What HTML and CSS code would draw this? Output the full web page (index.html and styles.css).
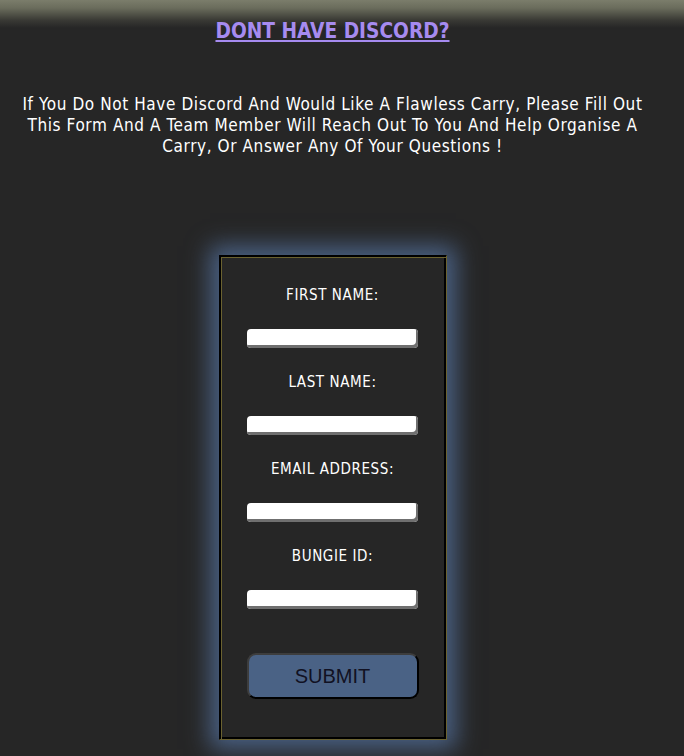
FILE: index.html
```html
<!DOCTYPE html>
<html>
<head>
<meta charset="utf-8">
<link rel="stylesheet" href="styles.css">
</head>
<body>
<div class="page">
  <h1 class="title"><a href="#">DONT HAVE DISCORD?</a></h1>
  <p class="intro">If You Do Not Have Discord And Would Like A Flawless Carry, Please Fill Out This Form And A Team Member Will Reach Out To You And Help Organise A Carry, Or Answer Any Of Your Questions !</p>
  <form class="form">
    <label class="label">FIRST NAME:</label>
    <input class="field" type="text">
    <label class="label">LAST NAME:</label>
    <input class="field" type="text">
    <label class="label">EMAIL ADDRESS:</label>
    <input class="field" type="text">
    <label class="label">BUNGIE ID:</label>
    <input class="field" type="text">
    <button class="submit" type="button">SUBMIT</button>
  </form>
</div>
</body>
</html>
```

FILE: styles.css
```css
html, body {
  margin: 0;
  padding: 0;
  background: #262626;
  height: 100%;
  overflow: hidden;
}
body {
  background: linear-gradient(to bottom, #7b7d6b 0px, #6a6c5c 8px, #3a3a35 20px, #262626 28px, #262626 100%);
  font-family: "DejaVu Sans Condensed", "DejaVu Sans", sans-serif;
  color: #ffffff;
}
.page {
  width: 665px;
  display: flex;
  flex-direction: column;
  align-items: center;
  padding-top: 18px;
}
.title {
  margin: 0;
  font-size: 20.7px;
  font-weight: bold;
  line-height: 26px;
}
.title a {
  color: #a68bf0;
  text-decoration: underline;
  text-underline-offset: 2px;
}
.intro {
  margin: 50px 0 0;
  width: 644px;
  text-align: center;
  font-size: 17px;
  line-height: 21px;
  letter-spacing: 0.6px;
}
.form {
  margin-top: 98px;
  width: 228px;
  height: 485px;
  box-sizing: border-box;
  border: 1px solid;
  border-color: #000 #6b6230 #6b6230 #000;
  background: #262626;
  box-shadow:
    inset 1px 1px 0 #000,
    inset 2px 2px 0 #6b6230,
    inset -2px -2px 0 #000,
    0 0 22px 9px #4a6184;
  display: flex;
  flex-direction: column;
  align-items: center;
  padding-top: 30px;
}
.label {
  font-size: 15px;
  line-height: 18px;
  letter-spacing: 0.6px;
  color: #fff;
}
.field {
  margin: 25px 0 25px;
  width: 171px;
  height: 19px;
  box-sizing: border-box;
  border: none;
  border-radius: 4px;
  background: #fff;
  box-shadow: inset -2px -3px 0 #6f6f6f;
  padding: 0;
}
.submit {
  margin-top: 19px;
  width: 172px;
  height: 46px;
  box-sizing: border-box;
  background: #4a6285;
  border: 2px solid #3d3d3d;
  border-right-color: #000;
  border-bottom-color: #000;
  border-radius: 9px;
  font-family: "Liberation Sans", Arial, sans-serif;
  font-size: 20px;
  color: #111122;
  padding: 0;
}
```
